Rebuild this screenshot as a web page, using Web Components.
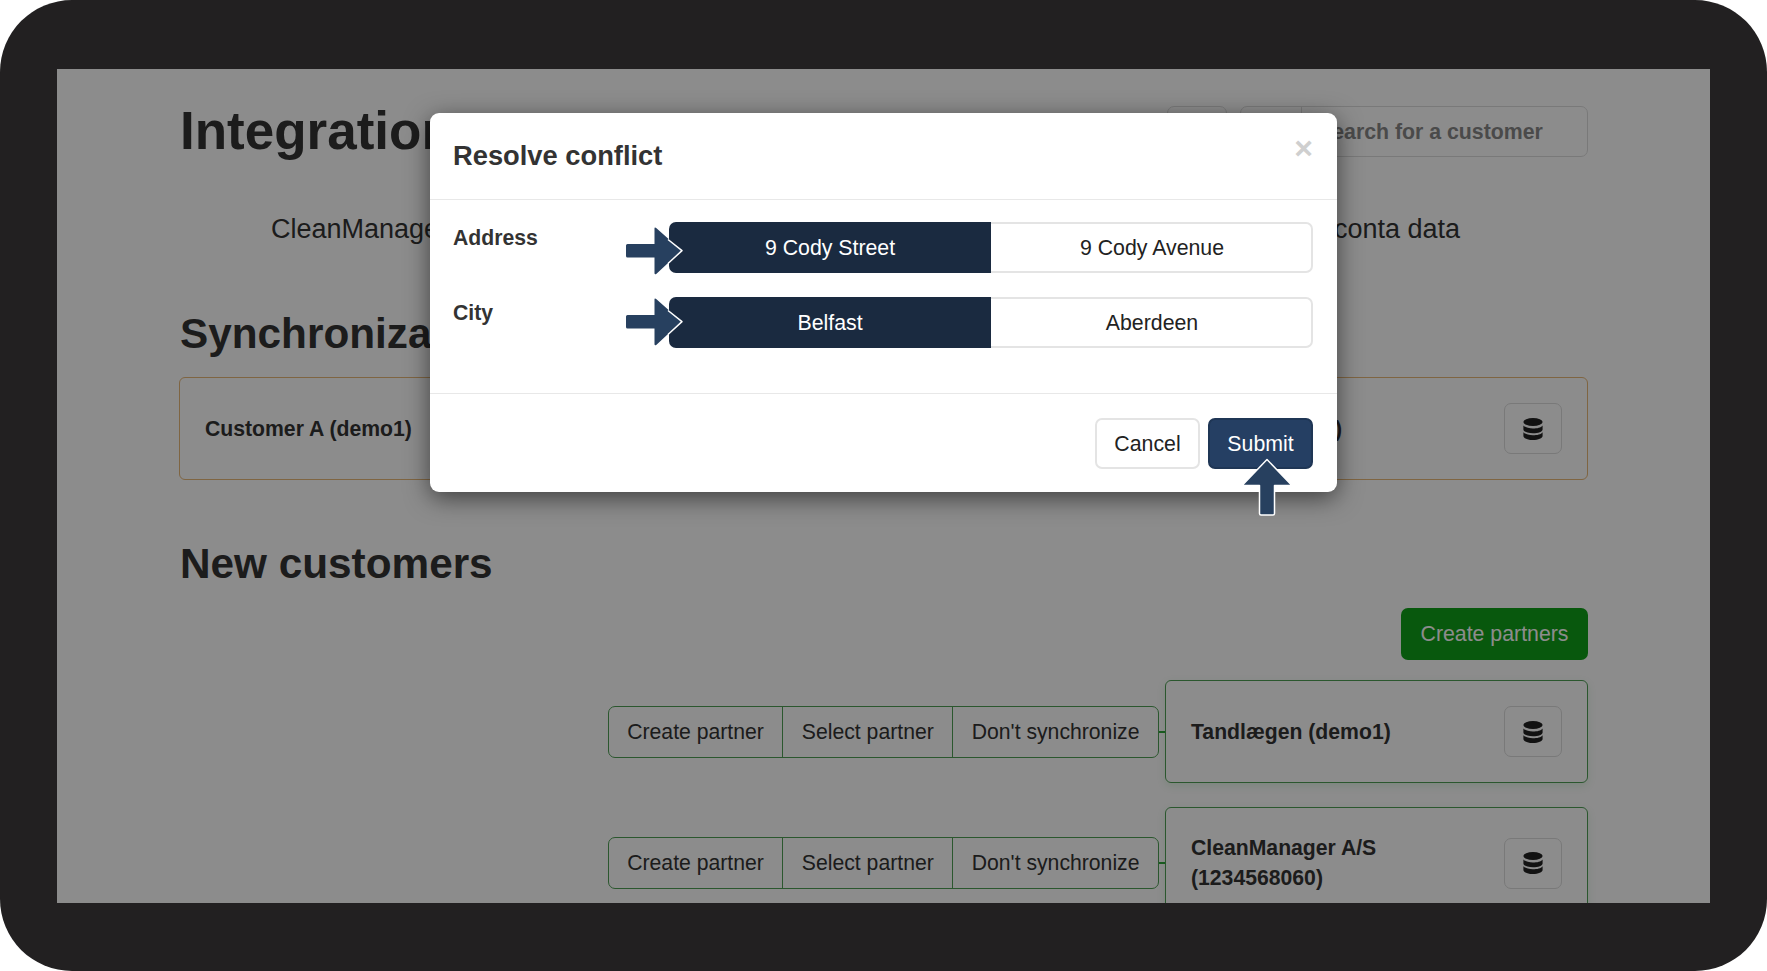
<!DOCTYPE html>
<html lang="en">
<head>
<meta charset="utf-8">
<title>Resolve conflict</title>
<style>
  html, body { margin: 0; height: 100%; background: #fff; }
  body { font-family: "Liberation Sans", Arial, sans-serif; color: #222; }
</style>
</head>
<body>
<device-frame>
  <div slot="page">
    <page-header></page-header>
    <section-title>Synchronization</section-title>
    <customer-card tone="orange" name="Customer A (demo1)" other="Customer A (demo1)"></customer-card>
    <section-title spaced>New customers</section-title>
    <create-bar>Create partners</create-bar>
    <new-customer-row name="Tandlægen (demo1)"></new-customer-row>
    <new-customer-row name="CleanManager A/S (1234568060)" later></new-customer-row>
  </div>
  <conflict-modal slot="modal" heading="Resolve conflict">
    <conflict-row label="Address" first="9 Cody Street" second="9 Cody Avenue" style="--arrow-top: 5px"></conflict-row>
    <conflict-row label="City" first="Belfast" second="Aberdeen" style="--arrow-top: 1px"></conflict-row>
  </conflict-modal>
</device-frame>

<script>
class DeviceFrame extends HTMLElement {
  constructor() {
    super();
    this.attachShadow({ mode: 'open' });
    this.shadowRoot.innerHTML = `
      <style>
        :host {
          display: block;
          width: 1767px;
          height: 971px;
          box-sizing: border-box;
          padding: 69px 57px 68px;
          background: #222021;
          border-radius: 72px;
          overflow: hidden;
        }
        .screen {
          position: relative;
          height: 100%;
          background: #fff;
          overflow: hidden;
        }
        .page { padding: 0 122px; }
        .backdrop {
          position: absolute;
          inset: 0;
          background: rgba(0, 0, 0, .45);
        }
        .modal-wrap {
          position: absolute;
          left: 373px;
          top: 44px;
        }
      </style>
      <div class="screen">
        <div class="page"><slot name="page"></slot></div>
        <div class="backdrop"></div>
        <div class="modal-wrap"><slot name="modal"></slot></div>
      </div>
    `;
  }
}

class PageHeader extends HTMLElement {
  constructor() {
    super();
    this.attachShadow({ mode: 'open' });
    this.shadowRoot.innerHTML = `
      <style>
        :host { display: block; }
        .top {
          display: flex;
          align-items: flex-start;
          justify-content: space-between;
          padding-top: 37px;
          height: 51px;
        }
        h1 {
          margin: -1px 0 0 1px;
          font-size: 53px;
          line-height: 51px;
          font-weight: bold;
          color: #333;
        }
        .tools { display: flex; gap: 13px; }
        .box {
          height: 51px;
          box-sizing: border-box;
          border: 1px solid #ddd;
          border-radius: 7px;
        }
        .small { width: 60px; }
        .search { display: flex; width: 348px; }
        .addon { width: 60px; border-right: 1px solid #ddd; }
        .field {
          padding-left: 16px;
          font-size: 21.3px;
          font-weight: bold;
          line-height: 50px;
          color: #888;
          white-space: nowrap;
        }
        .cols {
          display: flex;
          justify-content: space-between;
          padding: 56px 128px 0 92px;
          font-size: 27px;
          line-height: 32px;
          color: #333;
        }
      </style>
      <div class="top">
        <h1>Integration</h1>
        <div class="tools">
          <div class="box small"></div>
          <div class="box search">
            <div class="addon"></div>
            <div class="field">Search for a customer</div>
          </div>
        </div>
      </div>
      <div class="cols"><span>CleanManager data</span><span>Uniconta data</span></div>
    `;
  }
}

class SectionTitle extends HTMLElement {
  constructor() {
    super();
    this.attachShadow({ mode: 'open' });
    this.shadowRoot.innerHTML = `
      <style>
        :host { display: block; margin-top: 64px; }
        :host([spaced]) { margin-top: 59px; }
        h2 {
          margin: 0 0 0 1px;
          font-size: 42.3px;
          line-height: 50px;
          font-weight: bold;
          color: #333;
        }
      </style>
      <h2><slot></slot></h2>
    `;
  }
}

class DbButton extends HTMLElement {
  constructor() {
    super();
    this.attachShadow({ mode: 'open' });
    this.shadowRoot.innerHTML = `
      <style>
        :host {
          display: flex;
          flex: none;
          align-items: center;
          justify-content: center;
          width: 58px;
          height: 51px;
          box-sizing: border-box;
          border: 1.5px solid #dcdcdc;
          border-radius: 7px;
        }
        svg { width: 20px; height: 22px; fill: #222; }
      </style>
      <svg viewBox="0 0 20 22">
        <ellipse cx="10" cy="4" rx="9.6" ry="4"/>
        <path d="M.4 7.4C2 9.6 6 10.400 10 10.400s8-.8 9.6-3V11.500c0 2.200-4.300 3.800-9.600 3.800S.4 13.700.4 11.500z"/>
        <path d="M.4 14.200C2 16.400 6 17.200 10 17.200s8-.8 9.600-3V18c0 2.200-4.300 4-9.600 4S.4 20.200.4 18z"/>
      </svg>
    `;
  }
}

class CustomerCard extends HTMLElement {
  constructor() {
    super();
    this.attachShadow({ mode: 'open' });
    const other = this.getAttribute('other');
    this.shadowRoot.innerHTML = `
      <style>
        :host {
          display: flex;
          align-items: center;
          box-sizing: border-box;
          padding: 25px;
          border: 1px solid #4f9f55;
          border-radius: 6px;
          box-shadow: 0 3px 8px rgba(40, 160, 60, .14);
          font-size: 21.2px;
          line-height: 30px;
          font-weight: bold;
          color: #333;
        }
        :host([tone="orange"]) {
          margin-top: 18px;
          border-color: #e8b878;
          box-shadow: none;
        }
        .name { flex: 1; }
        .other { margin-right: 162px; }
      </style>
      <div class="name">${this.getAttribute('name')}</div>
      ${other ? `<div class="other">${other}</div>` : ''}
      <db-button></db-button>
    `;
  }
}

class CreateBar extends HTMLElement {
  constructor() {
    super();
    this.attachShadow({ mode: 'open' });
    this.shadowRoot.innerHTML = `
      <style>
        :host { display: flex; justify-content: flex-end; margin-top: 19px; }
        .btn {
          height: 52px;
          padding: 0 19.5px;
          display: flex;
          align-items: center;
          background: #10a018;
          border-radius: 7px;
          color: #fff;
          font-size: 21.3px;
        }
      </style>
      <div class="btn"><slot></slot></div>
    `;
  }
}

class NewCustomerRow extends HTMLElement {
  constructor() {
    super();
    this.attachShadow({ mode: 'open' });
    this.shadowRoot.innerHTML = `
      <style>
        :host {
          display: flex;
          align-items: center;
          justify-content: flex-end;
          margin-top: 20px;
        }
        :host([later]) { margin-top: 24px; }
        .group {
          display: flex;
          height: 52px;
          box-sizing: border-box;
          border: 1px solid #4f9f55;
          border-radius: 7px;
          font-size: 21.2px;
          color: #333;
        }
        .group span {
          display: flex;
          align-items: center;
          padding: 0 18.5px;
          border-left: 1px solid #4f9f55;
          white-space: nowrap;
        }
        .group span:first-child { border-left: 0; }
        .link { width: 6px; height: 2px; background: #2fa83a; }
        customer-card { display: flex; width: 423px; }
      </style>
      <div class="group">
        <span>Create partner</span><span>Select partner</span><span>Don't synchronize</span>
      </div>
      <div class="link"></div>
      <customer-card name="${this.getAttribute('name')}"></customer-card>
    `;
  }
}

class ConflictModal extends HTMLElement {
  constructor() {
    super();
    this.attachShadow({ mode: 'open' });
    this.shadowRoot.innerHTML = `
      <style>
        :host {
          display: block;
          width: 907px;
          background: #fff;
          border-radius: 9px;
          box-shadow: 0 6px 24px rgba(0, 0, 0, .55);
          color: #333;
        }
        header {
          display: flex;
          justify-content: space-between;
          height: 87px;
          box-sizing: border-box;
          padding: 27px 24px 0 23px;
          border-bottom: 1px solid #e8e8e8;
        }
        h4 { margin: 0; font-size: 27.3px; line-height: 32px; font-weight: bold; }
        .close {
          font-size: 32px;
          line-height: 32px;
          font-weight: bold;
          color: #cfcfcf;
          margin-top: -8px;
        }
        .body {
          display: flex;
          flex-direction: column;
          gap: 24px;
          height: 194px;
          box-sizing: border-box;
          padding: 22px 24px 0 23px;
          border-bottom: 1px solid #e8e8e8;
        }
        footer {
          display: flex;
          justify-content: flex-end;
          gap: 8px;
          height: 98px;
          box-sizing: border-box;
          padding: 24px 24px 0;
        }
        .btn {
          position: relative;
          display: flex;
          align-items: center;
          justify-content: center;
          width: 105px;
          height: 51px;
          padding-top: 1px;
          box-sizing: border-box;
          border: 2px solid #e4e4e4;
          border-radius: 7px;
          font-size: 21.3px;
          color: #222;
        }
        .btn.primary { background: #253f63; border-color: #1f3655; color: #fff; }
        pointer-arrow {
          position: absolute;
          left: 31.5px;
          top: 37.5px;
        }
      </style>
      <header>
        <h4>${this.getAttribute('heading')}</h4>
        <span class="close">×</span>
      </header>
      <div class="body"><slot></slot></div>
      <footer>
        <div class="btn">Cancel</div>
        <div class="btn primary">Submit<pointer-arrow dir="up"></pointer-arrow></div>
      </footer>
    `;
  }
}

class ConflictRow extends HTMLElement {
  constructor() {
    super();
    this.attachShadow({ mode: 'open' });
    this.shadowRoot.innerHTML = `
      <style>
        :host {
          display: flex;
          align-items: flex-start;
          height: 51px;
          font-size: 21.2px;
          color: #333;
        }
        .label {
          width: 216px;
          font-weight: bold;
          line-height: 31px;
        }
        .seg {
          position: relative;
          flex: 1;
          display: grid;
          grid-template-columns: 322px 1fr;
          height: 51px;
          font-size: 21.3px;
          color: #222;
        }
        .seg div {
          display: flex;
          align-items: center;
          justify-content: center;
          box-sizing: border-box;
          padding-top: 1px;
        }
        .on { background: #1a2a40; border-radius: 7px 0 0 7px; color: #fff; }
        .seg .off { padding-left: 2px; border: 2px solid #e4e4e4; border-left: 0; border-radius: 0 7px 7px 0; }
        pointer-arrow { position: absolute; left: -43px; top: var(--arrow-top, 5px); }
      </style>
      <div class="label">${this.getAttribute('label')}</div>
      <div class="seg">
        <div class="on">${this.getAttribute('first')}</div>
        <div class="off">${this.getAttribute('second')}</div>
        <pointer-arrow></pointer-arrow>
      </div>
    `;
  }
}

class PointerArrow extends HTMLElement {
  constructor() {
    super();
    this.attachShadow({ mode: 'open' });
    const up = this.getAttribute('dir') === 'up';
    this.shadowRoot.innerHTML = `
      <style>
        :host { display: block; line-height: 0; }
        svg { display: block; overflow: visible; }
        .fill { fill: #27405f; }
        .edge { fill: none; stroke: #fff; stroke-width: 1.5; stroke-linejoin: round; }
      </style>
      ${up
        ? `<svg width="50" height="58" viewBox="0 0 50 58">
            <path class="fill" d="M25 1.500 48.500 26Q49.500 27.500 48 27.500H32.500V55.500Q32.500 57 31 57H19Q17.500 57 17.500 55.500V27.500H2Q.5 27.500 1.500 26Z"/>
            <path class="edge" d="M25 1.500 48.500 26Q49.500 27.500 48 27.500H32.500V55.500Q32.500 57 31 57H19Q17.500 57 17.500 55.500V27.500H2Q.5 27.500 1.500 26Z"/>
          </svg>`
        : `<svg width="58" height="48" viewBox="0 0 58 48">
            <path class="fill" d="M29 .5Q29.800 .5 30.500 1.200L55.500 23.500 30.500 46.800Q29 48 28.500 46.500V30.500H1.500Q0 30.500 0 29V18.500Q0 17 1.500 17H28.500V1.500Q28.500 .5 29 .5Z"/>
            <path class="edge" d="M42 12.500 56 23.600 42 36.500"/>
          </svg>`}
    `;
  }
}

customElements.define('pointer-arrow', PointerArrow);
customElements.define('db-button', DbButton);
customElements.define('customer-card', CustomerCard);
customElements.define('page-header', PageHeader);
customElements.define('section-title', SectionTitle);
customElements.define('create-bar', CreateBar);
customElements.define('new-customer-row', NewCustomerRow);
customElements.define('conflict-row', ConflictRow);
customElements.define('conflict-modal', ConflictModal);
customElements.define('device-frame', DeviceFrame);
</script>
</body>
</html>
